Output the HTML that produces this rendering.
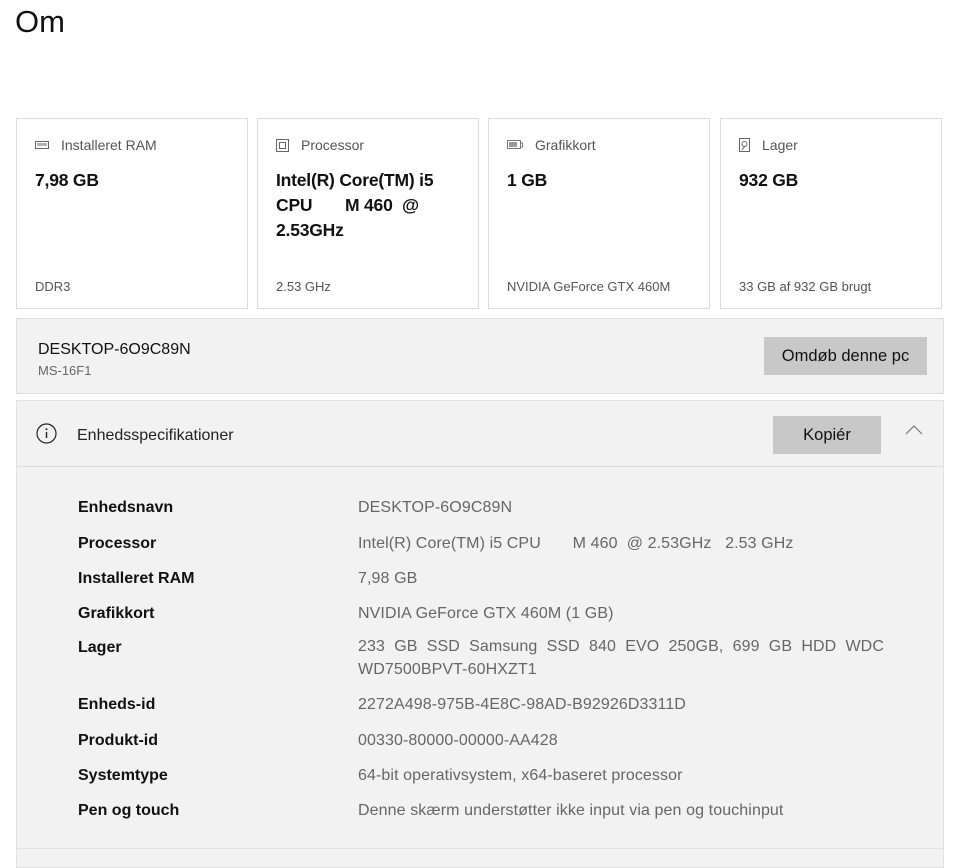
<!DOCTYPE html>
<html><head><meta charset="utf-8"><style>
*{box-sizing:border-box;margin:0;padding:0}
body{width:960px;height:859px;background:#fff;font-family:"Liberation Sans",sans-serif;color:#000;position:relative;overflow:hidden}
.abs{position:absolute}
h1{position:absolute;left:15px;top:4px;font-size:31px;font-weight:normal;color:#111}
.card{position:absolute;top:118px;height:191px;border:1px solid #ddd;background:#fff}
.card .lbl{position:absolute;left:18px;top:18px;font-size:14px;color:#555;display:flex;align-items:center}
.card .lbl svg{margin-right:12px}
.card .val{position:absolute;left:18px;top:49px;font-size:17.5px;font-weight:bold;line-height:25px;color:#111;letter-spacing:-0.2px}
.card .ft{position:absolute;left:18px;top:160px;font-size:13px;color:#555}
.panel{position:absolute;left:16px;width:928px;background:#f2f2f2;border:1px solid #e2e2e2}
.btn{position:absolute;background:#c8c8c8;font-size:16.5px;color:#111;text-align:center}
.row{position:absolute;left:78px;font-size:16px;font-weight:bold;color:#111}
.v{position:absolute;left:358px;font-size:16px;color:#666;width:526px;letter-spacing:0.1px}
</style></head><body>
<h1>Om</h1>

<div class="card" style="left:16px;width:232px">
 <div class="lbl"><svg width="14" height="10"><rect x="0.5" y="1.5" width="13" height="7" fill="none" stroke="#666"/><path d="M3 3v3M5 3v3M7 3v3M9 3v3M11 3v3" stroke="#666"/></svg>Installeret RAM</div>
 <div class="val">7,98 GB</div><div class="ft">DDR3</div></div>
<div class="card" style="left:257px;width:222px">
 <div class="lbl"><svg width="13" height="13"><rect x="0.5" y="0.5" width="12" height="12" fill="none" stroke="#666"/><rect x="3.5" y="3.5" width="6" height="6" fill="none" stroke="#666"/></svg>Processor</div>
 <div class="val">Intel(R) Core(TM) i5<br>CPU&nbsp;&nbsp;&nbsp;&nbsp;&nbsp;&nbsp; M 460&nbsp; @<br>2.53GHz</div><div class="ft">2.53 GHz</div></div>
<div class="card" style="left:488px;width:222px">
 <div class="lbl"><svg width="16" height="12"><rect x="0.5" y="1.5" width="13" height="8" fill="none" stroke="#777"/><rect x="2" y="3" width="8" height="5" fill="#999"/><path d="M14 4h1.5v4H14" stroke="#777" fill="none"/></svg>Grafikkort</div>
 <div class="val">1 GB</div><div class="ft">NVIDIA GeForce GTX 460M</div></div>
<div class="card" style="left:720px;width:222px">
 <div class="lbl"><svg width="11" height="14"><rect x="0.5" y="0.5" width="10" height="13" fill="none" stroke="#666"/><circle cx="5.5" cy="6" r="2.5" fill="none" stroke="#666"/><path d="M3 12l3-4" stroke="#666"/></svg>Lager</div>
 <div class="val">932 GB</div><div class="ft">33 GB af 932 GB brugt</div></div>

<div class="panel" style="top:318px;height:76px">
 <div class="abs" style="left:21px;top:22px;font-size:16px;color:#111">DESKTOP-6O9C89N</div>
 <div class="abs" style="left:21px;top:44px;font-size:13px;color:#666">MS-16F1</div>
 <div class="btn" style="left:747px;top:18px;width:163px;height:38px;line-height:38px">Omdøb denne pc</div>
</div>

<div class="panel" style="top:400px;height:449px">
 <div class="abs" style="left:0;top:0;width:926px;height:66px;border-bottom:1px solid #ddd"></div>
 <svg class="abs" style="left:19px;top:22px" width="21" height="21"><circle cx="10.5" cy="10.5" r="9.5" fill="none" stroke="#222" stroke-width="1.2"/><path d="M10.5 9v6" stroke="#222" stroke-width="1.4"/><circle cx="10.5" cy="6.2" r="1" fill="#222"/></svg>
 <div class="abs" style="left:60px;top:26px;font-size:16px;color:#222">Enhedsspecifikationer</div>
 <div class="btn" style="left:756px;top:15px;width:108px;height:38px;line-height:38px">Kopiér</div>
 <svg class="abs" style="left:888px;top:24px" width="18" height="10"><path d="M1 9l8-8 8 8" fill="none" stroke="#777" stroke-width="1.2"/></svg>
</div>
<div class="panel" style="top:848px;height:20px"></div>

<div class="row" style="top:499px">Enhedsnavn</div><div class="v" style="top:499px">DESKTOP-6O9C89N</div>
<div class="row" style="top:535px">Processor</div><div class="v" style="top:535px">Intel(R) Core(TM) i5 CPU&nbsp;&nbsp;&nbsp;&nbsp;&nbsp;&nbsp; M 460&nbsp; @ 2.53GHz&nbsp;&nbsp; 2.53 GHz</div>
<div class="row" style="top:570px">Installeret RAM</div><div class="v" style="top:570px">7,98 GB</div>
<div class="row" style="top:605px">Grafikkort</div><div class="v" style="top:605px">NVIDIA GeForce GTX 460M (1 GB)</div>
<div class="row" style="top:639px">Lager</div><div class="v" style="top:635px;line-height:23px;text-align:justify">233 GB SSD Samsung SSD 840 EVO 250GB, 699 GB HDD WDC WD7500BPVT-60HXZT1</div>
<div class="row" style="top:696px">Enheds-id</div><div class="v" style="top:696px">2272A498-975B-4E8C-98AD-B92926D3311D</div>
<div class="row" style="top:732px">Produkt-id</div><div class="v" style="top:732px">00330-80000-00000-AA428</div>
<div class="row" style="top:767px">Systemtype</div><div class="v" style="top:767px">64-bit operativsystem, x64-baseret processor</div>
<div class="row" style="top:802px">Pen og touch</div><div class="v" style="top:802px">Denne skærm understøtter ikke input via pen og touchinput</div>
</body></html>
